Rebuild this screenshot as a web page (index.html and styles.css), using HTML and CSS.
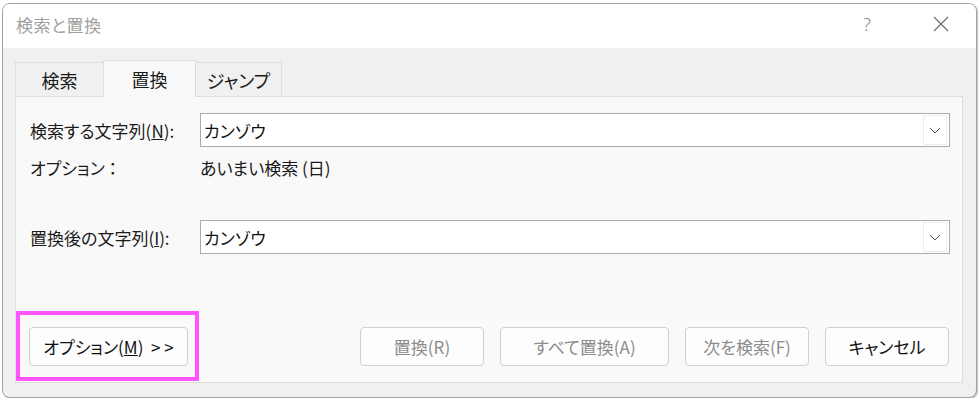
FILE: index.html
```html
<!DOCTYPE html>
<html lang="ja">
<head>
    <meta charset="UTF-8">
    <meta name="viewport" content="width=device-width, initial-scale=1.0">
    <title>検索と置換</title>
    <link rel="stylesheet" href="styles.css">
</head>
<body>
    <div class="window">
        <div class="title-bar">
            <span class="title">検索と置換</span>
            <div class="title-buttons">
                <span class="help">?</span>
                <svg class="close" width="16" height="16" viewBox="0 0 16 16">
                    <path d="M1 1 L15 15 M15 1 L1 15" stroke="#6a6a6a" stroke-width="1.1" fill="none"/>
                </svg>
            </div>
        </div>

        <div class="dialog-body">
            <div class="tabs">
                <div class="tab">検索</div>
                <div class="tab active">置換</div>
                <div class="tab">ジャンプ</div>
            </div>

            <div class="panel">
                <div class="field-row first">
                    <label class="label">検索する文字列(<u>N</u>):</label>
                    <div class="combo">
                        <span class="combo-text">カンゾウ</span>
                        <span class="combo-btn">
                            <svg width="12" height="7" viewBox="0 0 12 7"><path d="M1 1 L6 6 L11 1" stroke="#555" stroke-width="1" fill="none"/></svg>
                        </span>
                    </div>
                </div>

                <div class="option-row">
                    <span class="label">オプション ：</span>
                    <span>あいまい検索 (日)</span>
                </div>

                <div class="field-row second">
                    <label class="label">置換後の文字列(<u>I</u>):</label>
                    <div class="combo">
                        <span class="combo-text">カンゾウ</span>
                        <span class="combo-btn">
                            <svg width="12" height="7" viewBox="0 0 12 7"><path d="M1 1 L6 6 L11 1" stroke="#555" stroke-width="1" fill="none"/></svg>
                        </span>
                    </div>
                </div>

                <div class="footer">
                    <div class="highlight">
                        <button class="btn options-btn">オプション(<u>M</u>)&nbsp; &gt; &gt;</button>
                    </div>
                    <div class="actions">
                        <button class="btn disabled small">置換(R)</button>
                        <button class="btn disabled wide">すべて置換(A)</button>
                        <button class="btn disabled small">次を検索(F)</button>
                        <button class="btn small">キャンセル</button>
                    </div>
                </div>
            </div>
        </div>
    </div>
</body>
</html>
```

FILE: styles.css
```css
/* General */
body {
    margin: 0;
    padding: 0;
    background: #ffffff;
    font-family: "Noto Sans CJK JP", "Noto Sans", sans-serif;
    font-size: 17px;
    font-feature-settings: "palt";
    color: #1a1a1a;
}

/* Window frame */
.window {
    width: 973px;
    height: 393px;
    margin: 3px 0 0 2px;
    border: 1px solid #a3a3a3;
    border-radius: 8px;
    box-shadow: 1px 1px 1px rgba(0, 0, 0, 0.25);
    overflow: hidden;
    display: flex;
    flex-direction: column;
    background: #f0f0f0;
}

.title-bar {
    height: 44px;
    flex-shrink: 0;
    background: #ffffff;
    display: flex;
    align-items: center;
    justify-content: space-between;
    padding: 0 0 0 13px;
}

.title {
    color: #a0a0a0;
    font-size: 17px;
    line-height: 1;
    margin-top: -4px;
    letter-spacing: 0.5px;
}

.title-buttons {
    display: flex;
    align-items: center;
    margin-top: -4px;
}

.help {
    color: #8a8a8a;
    font-size: 18px;
    font-family: "Noto Sans", sans-serif;
    font-weight: 300;
    margin-right: 62px;
}

.close {
    margin-right: 27px;
}

/* Body */
.dialog-body {
    flex: 1;
    padding: 12px 13px 14px 12px;
    display: flex;
    flex-direction: column;
}

/* Tabs */
.tabs {
    display: flex;
    align-items: flex-end;
    height: 37px;
    margin-bottom: -1px;
    position: relative;
    z-index: 1;
}

.tab {
    height: 34px;
    box-sizing: border-box;
    margin-bottom: 1px;
    border: 1px solid #dddddd;
    border-bottom: none;
    background: #f0f0f0;
    display: flex;
    align-items: center;
    justify-content: center;
    color: #1a1a1a;
    font-size: 18px;
    padding-top: 1px;
}

.tab:nth-child(1) { width: 89px; }
.tab:nth-child(2) { width: 93px; margin-left: -1px; }
.tab:nth-child(3) { width: 87px; margin-left: -1px; }

.tab.active {
    height: 37px;
    margin-bottom: 0;
    background: #f9f9f9;
    position: relative;
    z-index: 2;
    padding-top: 0;
}

/* Panel */
.panel {
    flex: 1;
    border: 1px solid #dddddd;
    background: #f9f9f9;
    display: flex;
    flex-direction: column;
    padding: 0 12px 0 0;
}

.field-row {
    display: flex;
    align-items: center;
    padding-left: 14px;
}

.field-row.first { margin-top: 16px; }
.field-row.second { margin-top: 43px; }

.label {
    width: 170px;
    flex-shrink: 0;
}

.combo {
    flex: 1;
    height: 34px;
    box-sizing: border-box;
    border: 1px solid #ababab;
    background: #ffffff;
    display: flex;
    align-items: center;
    justify-content: space-between;
    padding: 0 2px 0 3px;
}

.combo-text {
    color: #111;
}

.combo-btn {
    width: 24px;
    height: 30px;
    box-sizing: border-box;
    border: 1px solid #ececec;
    display: flex;
    align-items: center;
    justify-content: center;
}

.option-row {
    display: flex;
    align-items: center;
    height: 20px;
    margin-top: 10px;
    padding-left: 14px;
}

/* Footer buttons */
.footer {
    margin-top: 57px;
    display: flex;
    align-items: center;
}

.highlight {
    border: 4px solid #ff55ff;
    padding: 12px 7px 11px 9px;
}

.btn {
    height: 39px;
    box-sizing: border-box;
    border: 1px solid #d0d0d0;
    border-radius: 4px;
    background: #fdfdfd;
    font-family: inherit;
    font-size: 17px;
    font-feature-settings: "palt";
    color: #111;
    padding: 0;
}

.options-btn { width: 159px; }

.actions {
    margin-left: auto;
    margin-right: 1px;
    display: flex;
    gap: 16px;
}

.btn.small { width: 124px; }
.btn.wide { width: 169px; }

.btn.disabled {
    color: #8c8c8c;
}
```
